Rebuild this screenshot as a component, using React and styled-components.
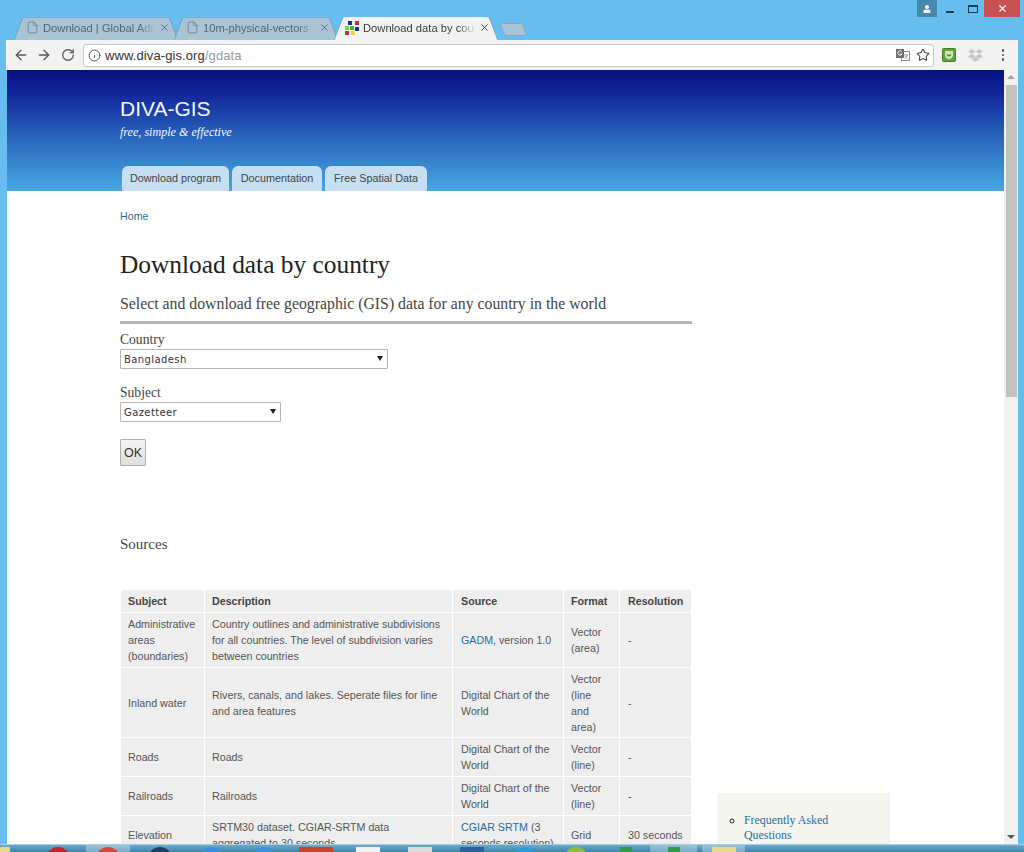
import React from 'react';
import styled, { createGlobalStyle } from 'styled-components';
import { ArrowLeft, ArrowRight, RotateCw, Info, Star, File, X } from 'lucide-react';
import { FaDropbox, FaUser } from 'react-icons/fa';

const GlobalStyle = createGlobalStyle`
  html, body {
    margin: 0;
    padding: 0;
    overflow: hidden;
  }
  body {
    font-family: "Liberation Sans", Arial, sans-serif;
  }
`;

const SERIF = '"Liberation Serif", "Times New Roman", serif';

const Win = styled.div`
  width: 1024px;
  height: 852px;
  overflow: hidden;
  display: flex;
  flex-direction: column;
  background: #66bdee;
`;

const TitleBar = styled.div`
  height: 40px;
  flex: none;
  display: flex;
  justify-content: space-between;
  align-items: flex-start;
  padding: 0 4px 0 18px;
`;

const TabStrip = styled.div`
  display: flex;
  align-items: flex-end;
  height: 40px;
`;

const Tab = styled.div`
  position: relative;
  width: 156px;
  height: 23px;
  margin-right: 4px;
  padding: 0 4px 2px 8px;
  box-sizing: border-box;
  display: flex;
  align-items: center;
  gap: 4px;
  font-size: 11.2px;
  color: ${p => (p.$active ? '#3c3c3c' : '#56646e')};
  z-index: ${p => (p.$active ? 2 : 1)};

  &::before, &::after {
    content: '';
    position: absolute;
    top: 0;
    bottom: 0;
    width: 60%;
    background: ${p => (p.$active ? '#f2f2f2' : '#a9c4d4')};
    border-top: 1px solid ${p => (p.$active ? '#e6eef2' : '#7fa9c2')};
    z-index: -1;
  }
  &::before {
    left: 0;
    transform: skewX(-20deg);
    border-left: 1px solid #6f9ab5;
    border-radius: 3px 0 0 0;
  }
  &::after {
    right: 0;
    transform: skewX(20deg);
    border-right: 1px solid #6f9ab5;
    border-radius: 0 3px 0 0;
  }
`;

const TabLabel = styled.span`
  flex: 1;
  white-space: nowrap;
  overflow: hidden;
  -webkit-mask-image: linear-gradient(to right, #000 85%, transparent 100%);
  mask-image: linear-gradient(to right, #000 85%, transparent 100%);
`;

const NewTab = styled.div`
  width: 23px;
  height: 13px;
  margin: 0 0 4px 4px;
  background: #a9c4d4;
  border: 1px solid #7fa9c2;
  border-radius: 2px;
  box-sizing: border-box;
  transform: skewX(20deg);
`;

const WinControls = styled.div`
  display: flex;
  align-items: flex-start;
`;

const UserBox = styled.div`
  width: 20px;
  height: 17px;
  margin-right: 1px;
  background: #4a88ab;
  color: #fff;
  display: flex;
  align-items: center;
  justify-content: center;
`;

const WinBtn = styled.div`
  width: 23px;
  height: 17px;
  display: flex;
  align-items: center;
  justify-content: center;
`;

const MinGlyph = styled.div`
  width: 8px;
  height: 2px;
  margin-top: 6px;
  background: #123a55;
`;

const MaxGlyph = styled.div`
  width: 8px;
  height: 5px;
  border: 1px solid #123a55;
  border-top-width: 2px;
`;

const CloseBtn = styled.div`
  width: 36px;
  height: 17px;
  background: #c75050;
  color: #fff;
  display: flex;
  align-items: center;
  justify-content: center;
`;

const Frame = styled.div`
  flex: 1;
  min-height: 0;
  margin: 0 6px;
  display: flex;
  flex-direction: column;
`;

const Toolbar = styled.div`
  height: 30px;
  flex: none;
  background: #f2f2f2;
  display: flex;
  align-items: center;
  padding: 0 14px 0 3px;
  box-sizing: border-box;
`;

const NavBtn = styled.div`
  width: 23.5px;
  display: flex;
  justify-content: center;
  color: #5a5a5a;
`;

const Omnibox = styled.div`
  flex: 1;
  height: 23px;
  margin: 0 8px 0 3.5px;
  box-sizing: border-box;
  background: #fff;
  border: 1px solid #c8c8c8;
  border-radius: 3px;
  display: flex;
  align-items: center;
  padding: 0 3px 0 4px;
  gap: 3px;
  color: #555;
`;

const Url = styled.div`
  flex: 1;
  font-size: 13px;
  letter-spacing: 0.1px;
  color: #333;
  padding-left: 1px;
  span {
    color: #999;
  }
`;

const ExtSlot = styled.div`
  width: 40px;
  display: flex;
  justify-content: center;
  color: #c4c4c4;
`;

const MenuDots = styled.div`
  margin-left: 6px;
  display: flex;
  flex-direction: column;
  gap: 2px;
  i {
    display: block;
    width: 2.5px;
    height: 2.5px;
    border-radius: 50%;
    background: #555;
  }
`;

const Viewport = styled.div`
  flex: 1;
  min-height: 0;
  display: flex;
  overflow: hidden;
  background: #fff;
`;

const Page = styled.div`
  flex: 1;
  min-width: 0;
  overflow: hidden;
  border-left: 1px solid #66bdee;
`;

const Scrollbar = styled.div`
  width: 14px;
  flex: none;
  background: #f1f1f1;
  display: flex;
  flex-direction: column;
  align-items: center;
`;

const ScrollArrow = styled.div`
  width: 0;
  height: 0;
  border-left: 4px solid transparent;
  border-right: 4px solid transparent;
  ${p => (p.$down
    ? 'border-top: 4px solid #555; margin-top: auto; margin-bottom: 5px;'
    : 'border-bottom: 4px solid #a3a3a3; margin-top: 5px;')}
`;

const ScrollThumb = styled.div`
  width: 11px;
  height: 312px;
  margin-top: 6px;
  background: #c1c1c1;
`;

const Header = styled.header`
  height: 121px;
  box-sizing: border-box;
  padding: 26px 0 0 113px;
  background: linear-gradient(to bottom, #070f80 0%, #12279a 20%, #2c6cc0 60%, #48a8e2 100%);
  display: flex;
  flex-direction: column;
`;

const SiteName = styled.div`
  font-size: 21px;
  line-height: 25px;
  color: #f2f6fb;
`;

const Tagline = styled.div`
  font-family: ${SERIF};
  font-style: italic;
  font-size: 12.1px;
  line-height: 16px;
  margin-top: 3px;
  color: #f4f7fb;
`;

const NavTabs = styled.nav`
  margin-top: auto;
  margin-left: 2px;
  display: flex;
  gap: 3px;
`;

const NavTab = styled.a`
  height: 25px;
  width: ${p => p.$w}px;
  padding-bottom: 2px;
  box-sizing: border-box;
  background: #c7dff3;
  border-radius: 6px 6px 0 0;
  display: flex;
  align-items: center;
  justify-content: center;
  font-size: 10.8px;
  color: #444;
`;

const Body = styled.div`
  display: grid;
  grid-template-columns: 572px 173px;
  column-gap: 25px;
  padding-left: 113px;
`;

const Main = styled.main`
  padding-top: 18px;
`;

const Crumb = styled.a`
  display: block;
  font-size: 10.7px;
  line-height: 14px;
  color: #2a6c8e;
`;

const Title = styled.h1`
  margin: 25px 0 0;
  font-family: ${SERIF};
  font-weight: 400;
  font-size: 25.4px;
  line-height: 32px;
  color: #222;
`;

const Subtitle = styled.h2`
  margin: 14px 0 0;
  padding-bottom: 7px;
  font-family: ${SERIF};
  font-weight: 400;
  font-size: 15.8px;
  line-height: 20px;
  color: #444;
  border-bottom: 3px solid #b4b4b4;
`;

const Field = styled.div`
  margin-top: ${p => p.$mt}px;
`;

const FieldLabel = styled.label`
  display: block;
  font-family: ${SERIF};
  font-size: 13.6px;
  line-height: 16px;
  color: #444;
  margin-bottom: 1px;
`;

const SelectWrap = styled.div`
  position: relative;
  width: ${p => p.$w}px;
  height: 20px;

  &::after {
    content: '';
    position: absolute;
    right: 5px;
    top: 7px;
    border-left: 3px solid transparent;
    border-right: 3px solid transparent;
    border-top: 5px solid #222;
  }
`;

const Select = styled.select`
  appearance: none;
  display: block;
  width: 100%;
  height: 100%;
  box-sizing: border-box;
  padding: 0 0 0 3px;
  background: #fff;
  border: 1px solid #b5b5b5;
  border-radius: 1px;
  font-family: "DejaVu Sans", Verdana, sans-serif;
  font-size: 10px;
  letter-spacing: 0.4px;
  color: #333;
`;

const OkButton = styled.button`
  display: block;
  width: 26px;
  height: 27px;
  margin-top: 17px;
  padding: 0;
  background: linear-gradient(to bottom, #f4f4f4, #dedede);
  border: 1px solid #b0b0b0;
  border-radius: 1px;
  font-family: "Liberation Sans", Arial, sans-serif;
  font-size: 12.5px;
  color: #333;
`;

const Sources = styled.h3`
  margin: 69px 0 0;
  font-family: ${SERIF};
  font-weight: 400;
  font-size: 15px;
  line-height: 18px;
  color: #444;
`;

const Table = styled.table`
  margin-top: 36px;
  width: 572px;
  table-layout: fixed;
  border-collapse: separate;
  border-spacing: 1px;
  font-size: 10.7px;
  line-height: 16px;
  color: #555;

  th:nth-child(3), td:nth-child(3), th:nth-child(5), td:nth-child(5) {
    padding-left: 8px;
  }
`;

const Th = styled.th`
  background: #eee;
  padding: 3px 7px;
  text-align: left;
  font-weight: 700;
  color: #444;
`;

const Td = styled.td`
  background: #eee;
  padding: 3px 8px ${p => (p.$tight ? 2 : 3)}px 7px;
  vertical-align: middle;
`;

const Link = styled.a`
  color: #2a6c9e;
`;

const Side = styled.aside`
  margin-top: 602px;
  height: 200px;
  background: #f5f5f0;
  padding: 20px 40px 0 27px;
  box-sizing: border-box;
`;

const SideList = styled.ul`
  margin: 0;
  padding: 0;
  list-style: circle;
  font-family: ${SERIF};
  font-size: 11.9px;
  line-height: 15px;
  color: #2a6c9e;

  li::marker {
    color: #222;
  }
`;

const Taskbar = styled.div`
  height: 8px;
  flex: none;
  margin-top: auto;
  background: linear-gradient(to bottom, #6fa9c8, #3f85ad);
  border-top: 1px solid #a4cfe3;
  box-sizing: border-box;
  display: flex;
  overflow: hidden;
`;

const TaskSlot = styled.div`
  width: ${p => p.$w}px;
  margin-left: ${p => p.$ml || 0}px;
  flex: none;
  display: flex;
  justify-content: ${p => (p.$start ? 'flex-start' : 'center')};
  background: ${p => (p.$on ? 'rgba(255,255,255,0.3)' : 'transparent')};
`;

const TaskIcon = styled.div`
  width: ${p => p.$w || 24}px;
  height: 24px;
  margin-top: 2px;
  border-radius: ${p => (p.$square ? '1px' : '50%')};
  background: ${p => p.$c};
`;

const Favicon = () => (
  <svg width="14" height="14" viewBox="0 0 14 14" style={{ flex: 'none', marginLeft: -1 }}>
    <rect x="3" y="0" width="4" height="4" fill="#1a2f8f" />
    <rect x="10" y="0" width="4" height="4" fill="#b83232" />
    <rect x="5" y="5" width="4" height="4" fill="#3fb53f" />
    <rect x="0" y="5" width="4" height="4" fill="#7bd04a" />
    <rect x="10" y="6" width="4" height="4" fill="#1a2f8f" />
    <rect x="0" y="10" width="4" height="4" fill="#b83232" />
    <rect x="6" y="10" width="4" height="4" fill="#e8d83a" />
  </svg>
);

const TranslateIcon = () => (
  <svg width="14" height="14" viewBox="0 0 14 14">
    <rect x="5.5" y="3.5" width="8" height="9" fill="#fff" stroke="#8a8a8a" />
    <path d="M8 7h4M10 6v1M11.5 7c-.5 1.6-1.5 2.6-3 3.2M8.8 8c.5 1 1.3 1.7 2.7 2.2" stroke="#777" strokeWidth=".7" fill="none" />
    <rect x="0" y="1" width="8" height="9" fill="#6e6e6e" />
    <path d="M5.8 3.6A2.2 2.2 0 1 0 6 6H4.2" stroke="#fff" strokeWidth="1" fill="none" />
  </svg>
);

const ShieldBadge = () => (
  <svg width="14" height="14" viewBox="0 0 14 14">
    <rect x=".5" y=".5" width="13" height="13" rx="1" fill="#5da63f" stroke="#3e7d2a" />
    <path d="M3 3h8v4.5c0 2-2 3.3-4 4-2-.7-4-2-4-4z" fill="#cfe7b8" />
    <path d="M4.5 6.5c.5 2.5 4.5 2.5 5 0z" fill="#4c9132" />
  </svg>
);

const rows = [
  { subject: 'Administrative areas (boundaries)', desc: 'Country outlines and administrative subdivisions for all countries. The level of subdivision varies between countries', source: <><Link>GADM</Link>, version 1.0</>, format: 'Vector (area)', res: '-' },
  { subject: 'Inland water', desc: 'Rivers, canals, and lakes. Seperate files for line and area features', source: 'Digital Chart of the World', format: 'Vector (line and area)', res: '-', tight: true },
  { subject: 'Roads', desc: 'Roads', source: 'Digital Chart of the World', format: 'Vector (line)', res: '-' },
  { subject: 'Railroads', desc: 'Railroads', source: 'Digital Chart of the World', format: 'Vector (line)', res: '-' },
  { subject: 'Elevation', desc: 'SRTM30 dataset. CGIAR-SRTM data aggregated to 30 seconds.', source: <><Link>CGIAR SRTM</Link> (3 seconds resolution)</>, format: 'Grid', res: '30 seconds' },
];

const taskIcons = [
  { w: 32, c: '#e8d88a', square: true, iw: 10, start: true },
  { w: 52, c: '#c8202c' },
  { w: 44, ml: 2, c: '#d8483a', on: true },
  { w: 52, ml: 4, c: '#1d3f63' },
  { w: 52, c: '#3b8fdc' },
  { w: 52, c: '#3f8ed8' },
  { w: 52, c: '#c8452c', square: true, iw: 34 },
  { w: 52, c: '#f4f4f4', square: true },
  { w: 52, c: '#dcdcdc', square: true },
  { w: 52, c: '#2a5f9e', square: true },
  { w: 52, c: '#2e9bd8' },
  { w: 52, c: '#8fbf3a' },
  { w: 48, c: '#2f9a4a', square: true, iw: 12 },
  { w: 47, c: '#2f9a4a', square: true, iw: 12, on: true },
  { w: 43, ml: 5, c: '#e8d88a', square: true, on: true },
];

const App = () => (
  <Win>
    <GlobalStyle />
    <TitleBar>
      <TabStrip>
        <Tab>
          <File size={13} strokeWidth={1.4} color="#6c7a84" />
          <TabLabel>Download | Global Adm</TabLabel>
          <X size={11} strokeWidth={2} />
        </Tab>
        <Tab>
          <File size={13} strokeWidth={1.4} color="#6c7a84" />
          <TabLabel>10m-physical-vectors</TabLabel>
          <X size={11} strokeWidth={2} />
        </Tab>
        <Tab $active>
          <Favicon />
          <TabLabel>Download data by country</TabLabel>
          <X size={11} strokeWidth={2} />
        </Tab>
        <NewTab />
      </TabStrip>
      <WinControls>
        <UserBox><FaUser size={8} /></UserBox>
        <WinBtn><MinGlyph /></WinBtn>
        <WinBtn><MaxGlyph /></WinBtn>
        <CloseBtn><X size={11} strokeWidth={2.5} /></CloseBtn>
      </WinControls>
    </TitleBar>

    <Frame>
      <Toolbar>
        <NavBtn><ArrowLeft size={16} strokeWidth={2} /></NavBtn>
        <NavBtn><ArrowRight size={16} strokeWidth={2} /></NavBtn>
        <NavBtn><RotateCw size={14} strokeWidth={2.2} /></NavBtn>
        <Omnibox>
          <Info size={13} strokeWidth={1.8} />
          <Url>www.diva-gis.org<span>/gdata</span></Url>
          <TranslateIcon />
          <Star size={14} strokeWidth={1.8} color="#444" style={{ marginLeft: 3 }} />
        </Omnibox>
        <ShieldBadge />
        <ExtSlot><FaDropbox size={15} /></ExtSlot>
        <MenuDots><i /><i /><i /></MenuDots>
      </Toolbar>

      <Viewport>
        <Page>
          <Header>
            <SiteName>DIVA-GIS</SiteName>
            <Tagline>free, simple &amp; effective</Tagline>
            <NavTabs>
              <NavTab $w={107}>Download program</NavTab>
              <NavTab $w={90}>Documentation</NavTab>
              <NavTab $w={102}>Free Spatial Data</NavTab>
            </NavTabs>
          </Header>
          <Body>
            <Main>
              <Crumb>Home</Crumb>
              <Title>Download data by country</Title>
              <Subtitle>Select and download free geographic (GIS) data for any country in the world</Subtitle>
              <Field $mt={8}>
                <FieldLabel>Country</FieldLabel>
                <SelectWrap $w={268}>
                  <Select defaultValue="Bangladesh"><option>Bangladesh</option></Select>
                </SelectWrap>
              </Field>
              <Field $mt={16}>
                <FieldLabel>Subject</FieldLabel>
                <SelectWrap $w={161}>
                  <Select defaultValue="Gazetteer"><option>Gazetteer</option></Select>
                </SelectWrap>
              </Field>
              <OkButton>OK</OkButton>
              <Sources>Sources</Sources>
              <Table>
                <colgroup>
                  <col style={{ width: 83 }} />
                  <col style={{ width: 247 }} />
                  <col style={{ width: 110 }} />
                  <col style={{ width: 55 }} />
                  <col style={{ width: 71 }} />
                </colgroup>
                <thead>
                  <tr>
                    <Th>Subject</Th>
                    <Th>Description</Th>
                    <Th>Source</Th>
                    <Th>Format</Th>
                    <Th>Resolution</Th>
                  </tr>
                </thead>
                <tbody>
                  {rows.map(r => (
                    <tr key={r.subject}>
                      <Td $tight={r.tight}>{r.subject}</Td>
                      <Td $tight={r.tight}>{r.desc}</Td>
                      <Td $tight={r.tight}>{r.source}</Td>
                      <Td $tight={r.tight}>{r.format}</Td>
                      <Td $tight={r.tight}>{r.res}</Td>
                    </tr>
                  ))}
                </tbody>
              </Table>
            </Main>
            <Side>
              <SideList>
                <li>Frequently Asked Questions</li>
              </SideList>
            </Side>
          </Body>
        </Page>
        <Scrollbar>
          <ScrollArrow />
          <ScrollThumb />
          <ScrollArrow $down />
        </Scrollbar>
      </Viewport>
    </Frame>

    <Taskbar>
      {taskIcons.map((t, i) => (
        <TaskSlot key={i} $w={t.w} $ml={t.ml} $on={t.on} $start={t.start}>
          <TaskIcon $c={t.c} $square={t.square} $w={t.iw} />
        </TaskSlot>
      ))}
    </Taskbar>
  </Win>
);

export default App;
